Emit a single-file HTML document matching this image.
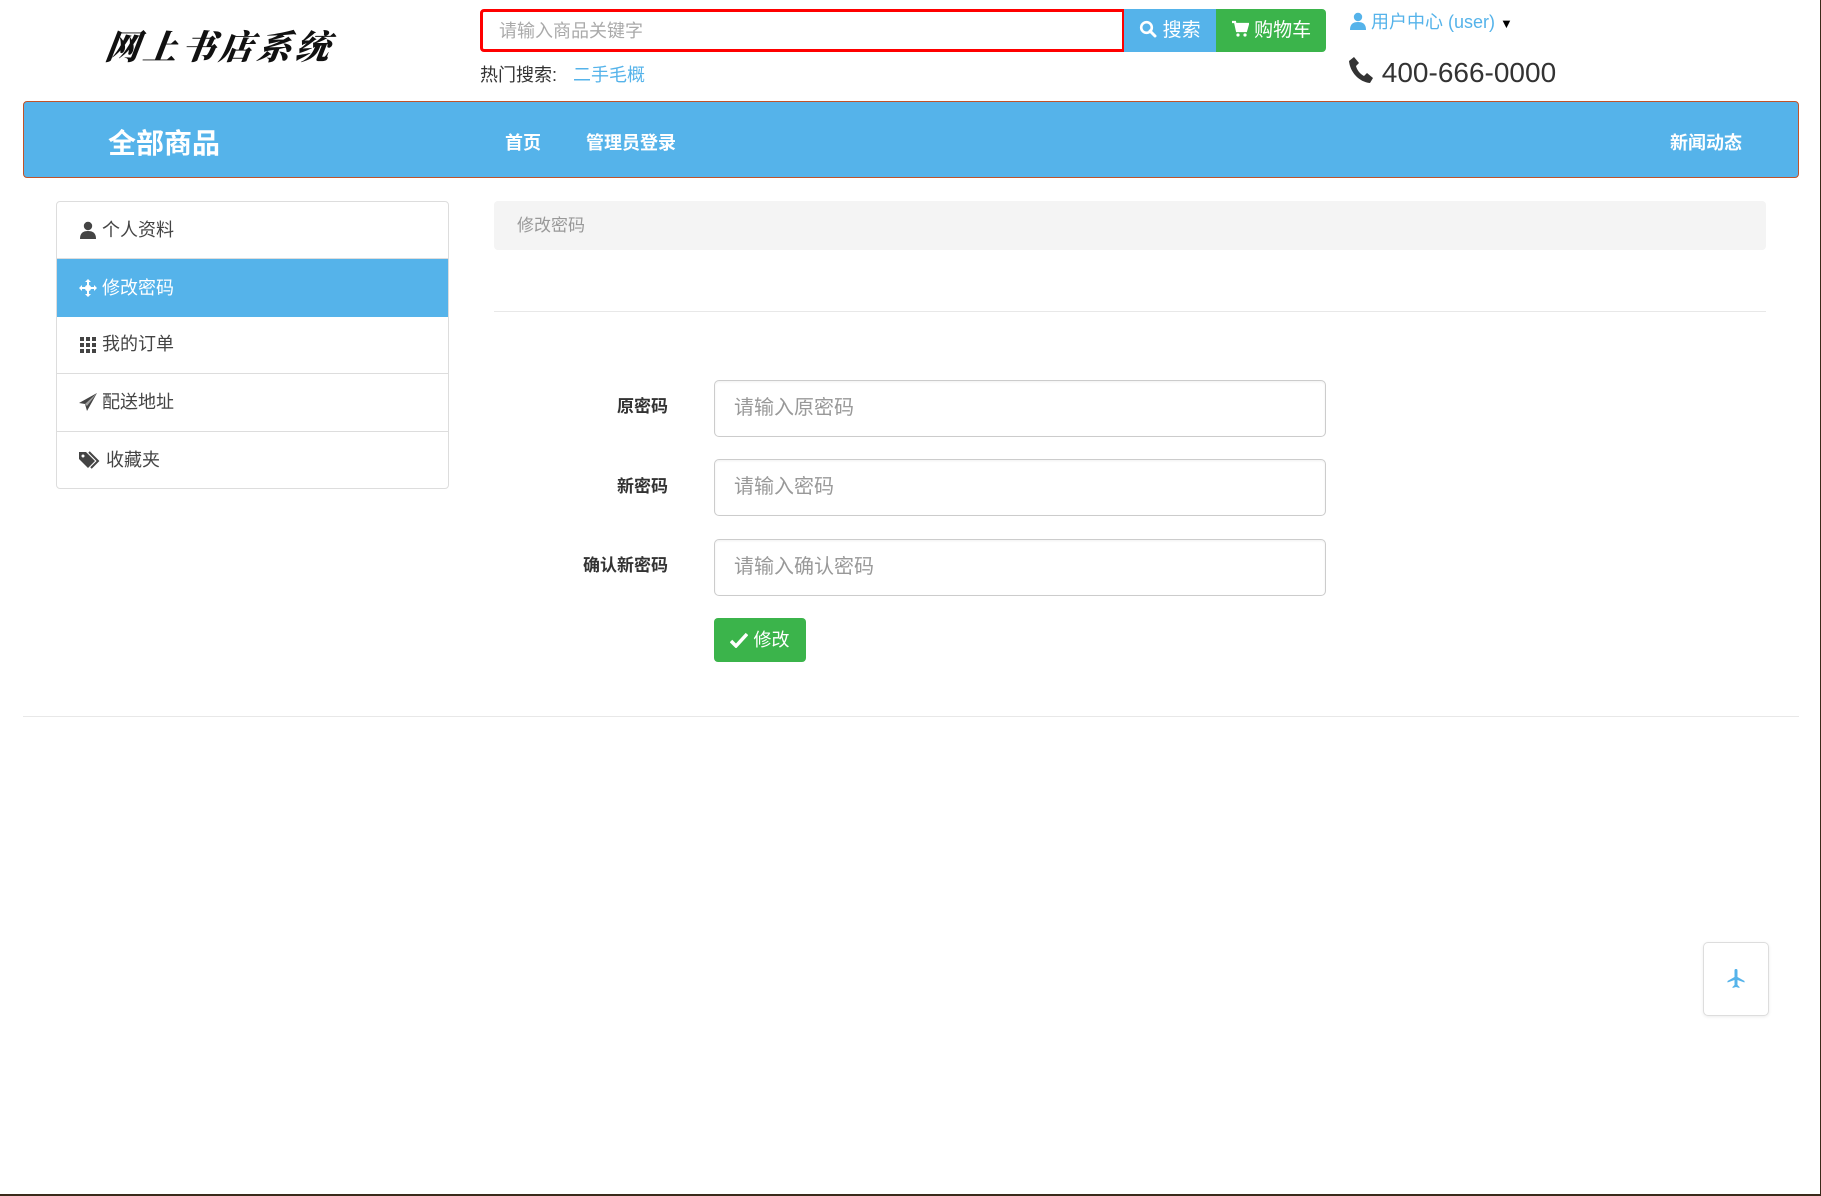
<!DOCTYPE html>
<html><head><meta charset="utf-8"><style>
*{box-sizing:border-box;margin:0;padding:0}
body{width:1821px;height:1196px;background:#fff;font-family:"Liberation Sans","Noto Sans CJK SC",sans-serif;position:relative;overflow:hidden;color:#333}
.a{position:absolute}
.logo{left:106px;top:20px;font-family:"Liberation Serif","Noto Serif CJK SC",serif;font-size:34px;font-weight:900;font-style:italic;letter-spacing:4px;color:#111;transform:skewX(-8deg)}
.search{left:480px;top:9px;width:645px;height:43px;border:3px solid #f00;border-radius:4px 0 0 4px;font-size:18px;color:#aaa;padding:8px 16px;line-height:22px}
.sbtn{left:1124px;top:9px;width:92px;height:43px;background:#55b3ea;color:#fff;font-size:19px;line-height:43px;text-align:center}
.cbtn{left:1216px;top:9px;width:110px;height:43px;background:#3bb44b;color:#fff;font-size:19px;line-height:43px;text-align:center;border-radius:0 4px 4px 0}
.hot{left:480px;top:61px;font-size:18px;color:#333}
.hot span{color:#55b3ea;margin-left:16px}
.uc{left:1350px;top:8px;font-size:18px;color:#55b3ea}
.phone{left:1348px;top:56px;font-size:28px;color:#333}
.nav{left:23px;top:101px;width:1776px;height:77px;background:#55b3ea;border:1px solid #c0532a;border-radius:4px}
.nav div{position:absolute;color:#fff;font-weight:bold}
.side{left:56px;top:201px;width:393px;height:288px;border:1px solid #ddd;border-radius:4px;overflow:hidden}
.side div{height:57.4px;border-bottom:1px solid #ddd;font-size:18px;line-height:57px;padding-left:22px;color:#444;display:flex;align-items:center}
.side div:last-child{border-bottom:none}
.side div.act{background:#55b3ea;color:#fff;border-bottom:none}
.side svg{margin-right:5px}
.bc{left:494px;top:201px;width:1272px;height:49px;background:#f4f4f4;border-radius:4px;font-size:17px;color:#999;padding-left:23px;line-height:49px}
.hr{height:1px;background:#e8e8e8}
.lab{width:200px;text-align:right;font-size:17px;font-weight:bold;color:#333}
.inp{left:714px;width:612px;height:57px;border:1px solid #ccc;border-radius:5px;font-size:20px;color:#999;padding-left:19px;line-height:55px;box-shadow:inset 0 1px 2px rgba(0,0,0,.06)}
.btn{left:714px;top:618px;width:92px;height:44px;background:#3bb44b;border-radius:4px;color:#fff;font-size:18px;line-height:44px;text-align:center}
.top{left:1703px;top:942px;width:66px;height:74px;border:1px solid #ddd;border-radius:5px;box-shadow:0 1px 3px rgba(0,0,0,.08)}
</style></head><body>
<div class="a logo">网上书店系统</div>
<div class="a search">请输入商品关键字</div>
<div class="a sbtn"><svg width="18" height="18" viewBox="0 0 18 18" style="vertical-align:-2px"><circle cx="7.5" cy="7.5" r="5.3" fill="none" stroke="#fff" stroke-width="2.6"/><path d="M11 11l5 5" stroke="#fff" stroke-width="3" stroke-linecap="round"/></svg> 搜索</div>
<div class="a cbtn"><svg width="18" height="18" viewBox="0 0 18 18" style="vertical-align:-2px"><path d="M1 2h3l2 9h9l2-7H5" fill="none" stroke="#fff" stroke-width="2.2"/><path d="M5 5h12l-2 6H6z" fill="#fff"/><circle cx="7" cy="15" r="1.6" fill="#fff"/><circle cx="14" cy="15" r="1.6" fill="#fff"/></svg> 购物车</div>
<div class="a hot">热门搜索:<span>二手毛概</span></div>
<div class="a uc"><svg width="16" height="18" viewBox="0 0 16 18" style="vertical-align:-2px"><circle cx="8" cy="5" r="4.2" fill="#55b3ea"/><path d="M0 18c0-6 3-8 8-8s8 2 8 8z" fill="#55b3ea"/></svg> 用户中心 (user) <span style="color:#000;font-size:13px">▼</span></div>
<div class="a phone"><svg width="26" height="28" viewBox="0 0 26 28" style="vertical-align:-2px"><path d="M6 1l5 6-3 3c1 4 4 8 8 10l3-3 6 5-3 5C11 26 2 16 1 5z" fill="#333"/></svg> 400-666-0000</div>
<div class="a nav">
<div style="left:84px;top:20px;font-size:28px">全部商品</div>
<div style="left:481px;top:27px;font-size:18px">首页</div>
<div style="left:562px;top:27px;font-size:18px">管理员登录</div>
<div style="left:1646px;top:27px;font-size:18px">新闻动态</div>
</div>
<div class="a side">
<div><svg width="18" height="18" viewBox="0 0 16 18"><circle cx="8" cy="5" r="4.2" fill="#444"/><path d="M0 18c0-6 3-8 8-8s8 2 8 8z" fill="#444"/></svg>个人资料</div>
<div class="act"><svg width="18" height="18" viewBox="0 0 18 18"><path d="M9 0l3 3h-2v3a3 3 0 0 1 2 2h3V6l3 3-3 3v-2h-3a3 3 0 0 1-2 2v3h2l-3 3-3-3h2v-3a3 3 0 0 1-2-2H3v2L0 9l3-3v2h3a3 3 0 0 1 2-2V3H6z" fill="#fff"/></svg>修改密码</div>
<div><svg width="18" height="18" viewBox="0 0 18 18" fill="#444"><rect x="1" y="1" width="4" height="4"/><rect x="7" y="1" width="4" height="4"/><rect x="13" y="1" width="4" height="4"/><rect x="1" y="7" width="4" height="4"/><rect x="7" y="7" width="4" height="4"/><rect x="13" y="7" width="4" height="4"/><rect x="1" y="13" width="4" height="4"/><rect x="7" y="13" width="4" height="4"/><rect x="13" y="13" width="4" height="4"/></svg>我的订单</div>
<div><svg width="18" height="18" viewBox="0 0 18 18"><path d="M18 0L0 10l6 1 2 7z" fill="#444"/><path d="M6 11L18 0 8 13" fill="#fff" opacity=".5"/></svg>配送地址</div>
<div><svg width="22" height="18" viewBox="0 0 22 18"><path d="M0 1v7l9 9 7-7-9-9z" fill="#444"/><path d="M10 1l9 9-7 7" fill="none" stroke="#444" stroke-width="2"/><circle cx="4" cy="5" r="1.5" fill="#fff"/></svg>收藏夹</div>
</div>
<div class="a bc">修改密码</div>
<div class="a hr" style="left:494px;top:311px;width:1272px"></div>
<div class="a lab" style="left:468px;top:392px">原密码</div>
<div class="a lab" style="left:468px;top:472px">新密码</div>
<div class="a lab" style="left:468px;top:551px">确认新密码</div>
<div class="a inp" style="top:380px">请输入原密码</div>
<div class="a inp" style="top:459px">请输入密码</div>
<div class="a inp" style="top:539px">请输入确认密码</div>
<div class="a btn"><svg width="18" height="16" viewBox="0 0 18 16" style="vertical-align:-2px"><path d="M1 9l5 5L17 2" fill="none" stroke="#fff" stroke-width="3.5"/></svg> 修改</div>
<div class="a hr" style="left:23px;top:716px;width:1776px"></div>
<div class="a top"><svg width="20" height="20" viewBox="0 0 20 20" style="position:absolute;left:22px;top:26px"><path d="M10 0c1.5 0 1.5 1 1.5 2v6l7 4v1.5l-7-2.5v5l2 2v1l-3.5-1-3.5 1v-1l2-2v-5l-7 2.5V12l7-4V2c0-1 0-2 1.5-2z" fill="#55b3ea"/></svg></div>
<div class="a" style="left:1820px;top:0;width:1px;height:1196px;background:#3a2a1a"></div>
<div class="a" style="left:0;top:1194px;width:1821px;height:2px;background:#3a2a1a"></div>
</body></html>
